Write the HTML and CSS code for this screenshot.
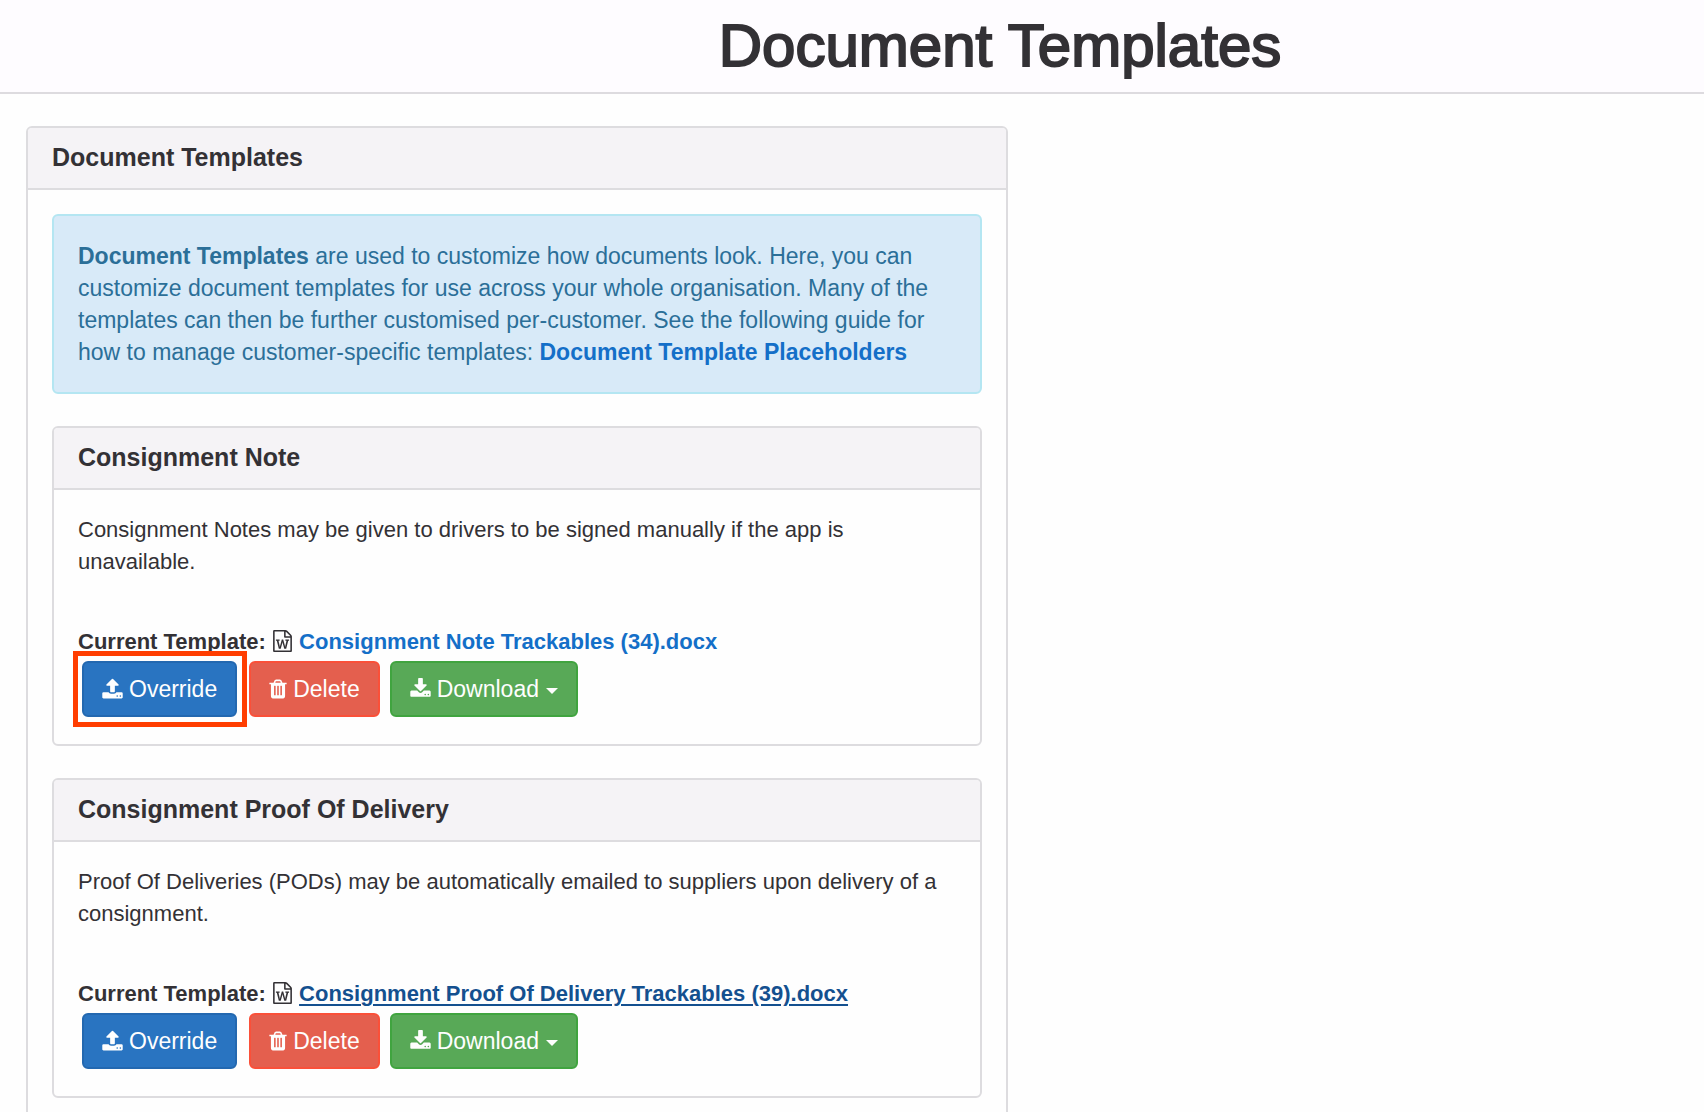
FILE: index.html
```html
<!DOCTYPE html>
<html lang="en">
<head>
<meta charset="utf-8">
<meta name="viewport" content="width=device-width, initial-scale=1">
<title>Document Templates</title>
<link rel="stylesheet" href="styles.css">
</head>
<body>
<svg class="sprite" aria-hidden="true">
  <symbol id="upload" viewBox="64 0 1664 1792"><path d="M1344 1472q0-26-19-45t-45-19-45 19-19 45 19 45 45 19 45-19 19-45zm256 0q0-26-19-45t-45-19-45 19-19 45 19 45 45 19 45-19 19-45zm128-224v320q0 40-28 68t-68 28h-1472q-40 0-68-28t-28-68v-320q0-40 28-68t68-28h427q21 56 70.5 92t110.5 36h256q61 0 110.5-36t70.5-92h427q40 0 68 28t28 68zm-325-648q-17 40-59 40h-256v448q0 26-19 45t-45 19h-256q-26 0-45-19t-19-45v-448h-256q-42 0-59-40-17-39 14-69l448-448q18-19 45-19t45 19l448 448q31 30 14 69z"/></symbol>
  <symbol id="download" viewBox="64 0 1664 1792"><path d="M1344 1344q0-26-19-45t-45-19-45 19-19 45 19 45 45 19 45-19 19-45zm256 0q0-26-19-45t-45-19-45 19-19 45 19 45 45 19 45-19 19-45zm128-224v320q0 40-28 68t-68 28h-1472q-40 0-68-28t-28-68v-320q0-40 28-68t68-28h465l135 136q58 56 136 56t136-56l136-136h464q40 0 68 28t28 68zm-325-569q17 41-14 70l-448 448q-18 19-45 19t-45-19l-448-448q-31-29-14-70 17-39 59-39h256v-448q0-26 19-45t45-19h256q26 0 45 19t19 45v448h256q42 0 59 39z"/></symbol>
  <symbol id="trash" viewBox="192 0 1408 1792"><path d="M704 1376v-704q0-14-9-23t-23-9h-64q-14 0-23 9t-9 23v704q0 14 9 23t23 9h64q14 0 23-9t9-23zm256 0v-704q0-14-9-23t-23-9h-64q-14 0-23 9t-9 23v704q0 14 9 23t23 9h64q14 0 23-9t9-23zm256 0v-704q0-14-9-23t-23-9h-64q-14 0-23 9t-9 23v704q0 14 9 23t23 9h64q14 0 23-9t9-23zm-544-992h448l-48-117q-7-9-17-11h-317q-10 2-17 11zm928 32v64q0 14-9 23t-23 9h-96v948q0 83-47 143.5t-113 60.5h-832q-66 0-113-58.5t-47-141.5v-952h-96q-14 0-23-9t-9-23v-64q0-14 9-23t23-9h309l70-167q15-37 54-63t79-26h320q40 0 79 26t54 63l70 167h309q14 0 23 9t9 23z"/></symbol>
  <symbol id="word" viewBox="128 0 1536 1792"><path d="M1596 380q28 28 48 76t20 88v1152q0 40-28 68t-68 28h-1344q-40 0-68-28t-28-68v-1600q0-40 28-68t68-28h896q40 0 88 20t76 48zm-444-244v376h376q-10-29-22-41l-313-313q-12-12-41-22zm384 1528v-1024h-416q-40 0-68-28t-28-68v-416h-768v1536h1280zm-1175-896v107h70l164 661h159l128-485q7-20 10-46 2-16 2-24h4l3 24q1 3 3.5 20t5.5 26l128 485h159l164-661h70v-107h-300v107h90l-99 438q-5 20-7 46l-2 21h-4l-3-21q-1-5-4-21t-5-25l-144-545h-114l-144 545q-2 9-4.5 24.5t-3.5 21.5l-4 21h-4l-2-21q-2-26-7-46l-99-438h90v-107h-300z"/></symbol>
</svg>
<header class="page-header"><h1>Document Templates</h1></header>
<main class="column">
  <section class="panel">
    <h2 class="panel-heading">Document Templates</h2>
    <div class="panel-body">
      <p class="alert"><strong>Document Templates</strong> are used to customize how documents look. Here, you can customize document templates for use across your whole organisation. Many of the templates can then be further customised per-customer. See the following guide for how to manage customer-specific templates: <a href="#placeholders">Document Template Placeholders</a></p>
      <section class="panel">
        <h3 class="panel-heading">Consignment Note</h3>
        <div class="panel-body">
          <p class="description">Consignment Notes may be given to drivers to be signed manually if the app is unavailable.</p>
          <p class="current">Current Template: <svg class="icon word" aria-hidden="true"><use href="#word"/></svg> <a href="#note">Consignment Note Trackables (34).docx</a></p>
          <div class="actions">
            <span class="highlight"><button type="button" class="btn primary"><svg class="icon wide" aria-hidden="true"><use href="#upload"/></svg>Override</button></span>
            <button type="button" class="btn danger"><svg class="icon slim" aria-hidden="true"><use href="#trash"/></svg>Delete</button>
            <button type="button" class="btn success"><svg class="icon wide" aria-hidden="true"><use href="#download"/></svg>Download<span class="caret"></span></button>
          </div>
        </div>
      </section>
      <section class="panel">
        <h3 class="panel-heading">Consignment Proof Of Delivery</h3>
        <div class="panel-body">
          <p class="description">Proof Of Deliveries (PODs) may be automatically emailed to suppliers upon delivery of a consignment.</p>
          <p class="current">Current Template: <svg class="icon word" aria-hidden="true"><use href="#word"/></svg> <a class="active" href="#pod">Consignment Proof Of Delivery Trackables (39).docx</a></p>
          <div class="actions">
            <button type="button" class="btn primary"><svg class="icon wide" aria-hidden="true"><use href="#upload"/></svg>Override</button>
            <button type="button" class="btn danger"><svg class="icon slim" aria-hidden="true"><use href="#trash"/></svg>Delete</button>
            <button type="button" class="btn success"><svg class="icon wide" aria-hidden="true"><use href="#download"/></svg>Download<span class="caret"></span></button>
          </div>
        </div>
      </section>
    </div>
  </section>
</main>
</body>
</html>
```
FILE: styles.css
```css
* { box-sizing: border-box; }
body {
  margin: 0;
  background: #fefefe;
  color: #333135;
  font: 22px/32px "Liberation Sans", Arial, sans-serif;
}
h1, h2, h3, p { margin: 0; }
.sprite { display: none; }

.page-header {
  padding: 14px 0 14px 296px;
  border-bottom: 2px solid #dddbdf;
  background: #fefcff;
  text-align: center;
}
h1 {
  font-size: 60px;
  line-height: 64px;
  font-weight: 400;
  -webkit-text-stroke: 2px currentColor;
}

.column { width: calc(58.3333% - 12px); margin: 32px 0 0 26px; }
.panel { border: 2px solid #dddcdf; border-radius: 6px; background: #fefefe; }
.panel-heading {
  padding: 14px 24px 16px;
  border-bottom: 2px solid #dddcdf;
  border-radius: 4px 4px 0 0;
  background: #f5f3f6;
  font-size: 25px;
  line-height: 30px;
  font-weight: 700;
}
.panel-body { padding: 24px; }
.panel .panel { margin-top: 32px; }

.alert {
  padding: 24px;
  border: 2px solid #b4e6f2;
  border-radius: 6px;
  background: #d8eaf8;
  color: #2b6f98;
  font-size: 23px;
}
a { color: #146fc8; font-weight: 700; text-decoration: none; }
a.active { color: #14508f; text-decoration: underline; text-decoration-thickness: 2px; text-underline-offset: 3px; }

.description { margin-bottom: 48px; }
.current { font-weight: 700; }
.icon { height: 22px; fill: currentColor; }
.wide { width: 21px; }
.slim { width: 18px; }
.word { width: 19px; margin: 0 1px; vertical-align: -3px; }

.actions { display: flex; gap: 10px; padding: 3px 4px; }
.btn {
  display: flex;
  align-items: center;
  height: 56px;
  padding: 0 18px;
  border: 2px solid;
  border-radius: 6px;
  color: #fefefe;
  font: inherit;
  font-size: 23px;
}
.btn .icon { margin-right: 6px; }
.primary { margin-right: 2px; border-color: #2368b0; background: #2974c1; }
.danger { border-color: #fa5039; background: #e45f4e; }
.success { border-color: #40a43f; background: #58a957; }
.caret {
  margin: 4px 0 0 7px;
  border: 6px solid transparent;
  border-top-color: currentColor;
  border-bottom: 0;
}
.highlight { position: relative; }
.highlight::after {
  content: "";
  position: absolute;
  inset: -10px -8px -10px -9px;
  border: 5px solid #ff3d00;
  pointer-events: none;
}
```
